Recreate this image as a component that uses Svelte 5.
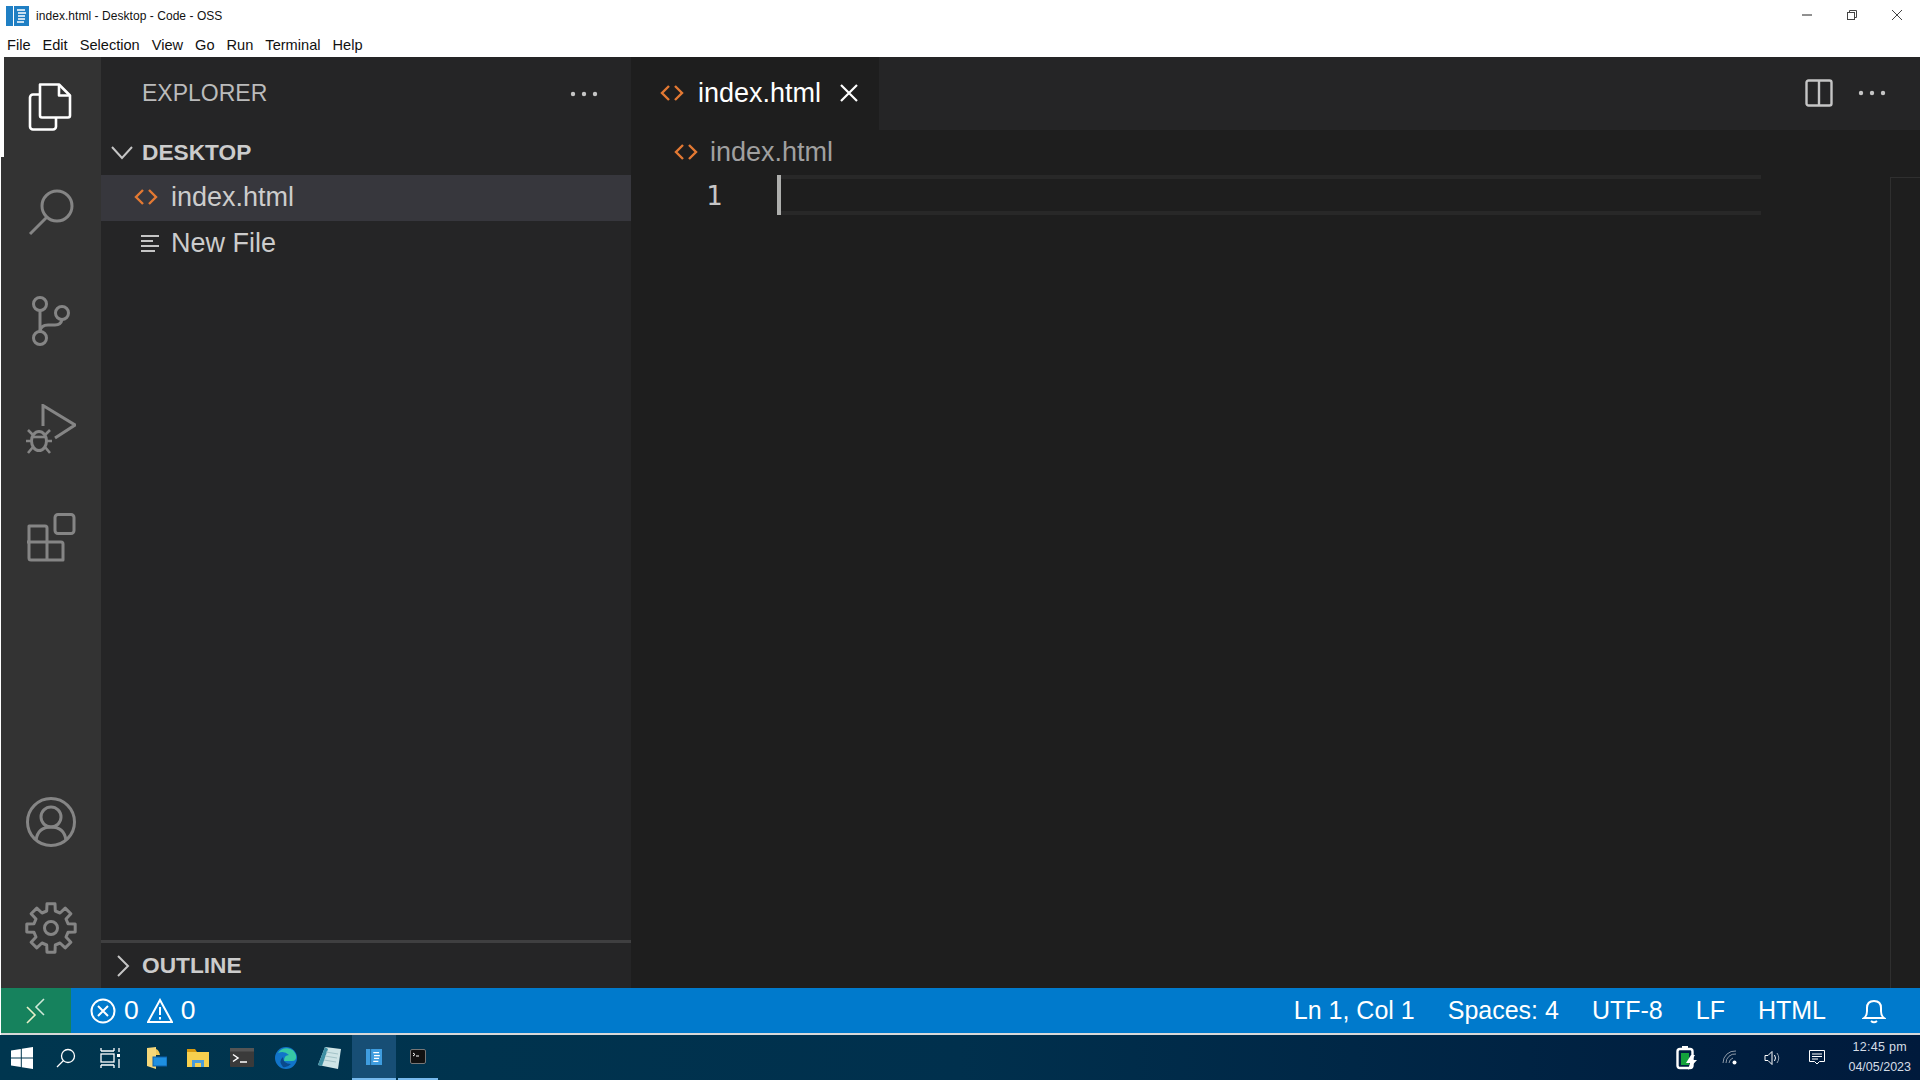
<script>
	const menus = ['File', 'Edit', 'Selection', 'View', 'Go', 'Run', 'Terminal', 'Help'];

	// eight square teeth round the settings cog
	function gearPath(cx, cy, outer, inner, teeth) {
		const pts = [];
		const step = (Math.PI * 2) / teeth;
		for (let i = 0; i < teeth; i++) {
			const a = i * step - Math.PI / 2;
			const spread = [
				[inner, -0.3],
				[outer, -0.2],
				[outer, 0.2],
				[inner, 0.3]
			];
			for (const [r, f] of spread) {
				const t = a + f * step * 1.05;
				pts.push(`${(cx + r * Math.cos(t)).toFixed(1)} ${(cy + r * Math.sin(t)).toFixed(1)}`);
			}
		}
		return 'M' + pts.join(' L') + ' Z';
	}
</script>

{#snippet htmlIcon(size)}
	<svg width={size} height={size} viewBox="0 0 24 24" fill="none" stroke="#e37933" stroke-width="2.4">
		<path d="M9 5 L2 12 L9 19" />
		<path d="M15 5 L22 12 L15 19" />
	</svg>
{/snippet}

{#snippet dots()}
	<svg width="28" height="6" viewBox="0 0 28 6" fill="#c5c5c5">
		<circle cx="3" cy="3" r="2.2" /><circle cx="14" cy="3" r="2.2" /><circle cx="25" cy="3" r="2.2" />
	</svg>
{/snippet}

<div class="window">
	<header class="titlebar">
		<svg class="app-icon" width="24" height="22" viewBox="0 0 24 22">
			<rect x="1" y="1" width="7" height="20" fill="#1f7fc4" />
			<rect x="9" y="1" width="15" height="20" fill="#1f7fc4" />
			<path d="M12 5h8M13 8h8M13 11h7M13 14h7M12 17h7" stroke="#fff" stroke-width="1.3" />
		</svg>
		<span class="title">index.html - Desktop - Code - OSS</span>
		<div class="controls">
			<svg width="12" height="12" viewBox="0 0 12 12"><path d="M1 6h10" stroke="#222" /></svg>
			<svg width="12" height="12" viewBox="0 0 12 12" fill="none" stroke="#444">
				<rect x="1.5" y="3.5" width="7" height="7" /><path d="M3.5 3.5v-2h7v7h-2" />
			</svg>
			<svg width="12" height="12" viewBox="0 0 12 12"><path d="M1 1l10 10M11 1L1 11" stroke="#444" /></svg>
		</div>
	</header>

	<nav class="menubar">
		{#each menus as m}
			<span>{m}</span>
		{/each}
	</nav>

	<div class="workbench">
		<aside class="activity">
			<div class="act-top">
				<div class="act active">
					<svg width="48" height="52" viewBox="0 0 48 52" fill="none" stroke="#fff" stroke-width="2.6" stroke-linejoin="round">
						<path d="M13 4.5 h19 l11 11 v20 a2 2 0 0 1 -2 2 h-26 a2 2 0 0 1 -2 -2 z" />
						<path d="M32 4.5 v11 h11" />
						<path d="M13 14.5 h-7 a3 3 0 0 0 -3 3 v29 a3 3 0 0 0 3 3 h20 a3 3 0 0 0 3 -3 v-9" />
					</svg>
				</div>
				<div class="act">
					<svg width="48" height="50" viewBox="0 0 48 50" fill="none" stroke="#858585" stroke-width="3">
						<circle cx="30" cy="19" r="15" /><path d="M20 30 L3 47" />
					</svg>
				</div>
				<div class="act">
					<svg width="40" height="50" viewBox="0 0 40 50" fill="none" stroke="#858585" stroke-width="3">
						<circle cx="9" cy="8" r="6.5" /><circle cx="31" cy="17" r="6.5" /><circle cx="9" cy="42" r="6.5" />
						<path d="M9 14.5 v21" /><path d="M9 35 q1 -6 8 -6 h7 q6 0 7 -5.500" />
					</svg>
				</div>
				<div class="act">
					<svg width="50" height="50" viewBox="0 0 50 50" fill="none" stroke="#858585" stroke-width="3">
						<path d="M17 22 V1.500 L49 21 L29 34" />
						<ellipse cx="13" cy="37" rx="7.500" ry="9.500" />
						<path d="M6 33 h14" stroke-width="2.600" />
						<path d="M2 26 l5 5 M24 26 l-5 5 M0 37 h5 M21 37 h5 M2 49 l5 -6 M24 49 l-5 -6" stroke-width="2.600" />
					</svg>
				</div>
				<div class="act">
					<svg width="50" height="50" viewBox="0 0 50 50" fill="none" stroke="#858585" stroke-width="3" stroke-linejoin="round">
						<rect x="29" y="1.500" width="19" height="19" rx="3" />
						<path d="M3 13 h16 a2 2 0 0 1 2 2 v14 h14 a2 2 0 0 1 2 2 v16 h-32 a2 2 0 0 1 -2 -2 z" />
						<path d="M1 29 h20 v18" />
					</svg>
				</div>
			</div>
			<div class="act-bottom">
				<div class="act">
					<svg width="50" height="50" viewBox="0 0 50 50" fill="none" stroke="#858585" stroke-width="3">
						<circle cx="25" cy="25" r="23.500" /><circle cx="25" cy="20" r="10" />
						<path d="M10 43 q2 -13 15 -13 q13 0 15 13" />
					</svg>
				</div>
				<div class="act gear">
					<svg width="52" height="52" viewBox="0 0 52 52" fill="none" stroke="#858585" stroke-width="3" stroke-linejoin="round">
						<circle cx="26" cy="26" r="6.500" />
						<path d={gearPath(26, 26, 24.5, 17.5, 8)} />
					</svg>
				</div>
			</div>
		</aside>

		<section class="sidebar">
			<div class="side-head">
				<span>EXPLORER</span>
				{@render dots()}
			</div>
			<div class="folder">
				<svg width="24" height="14" viewBox="0 0 24 14" fill="none" stroke="#c5c5c5" stroke-width="2"><path d="M2 1 L12 12 L22 1" /></svg>
				<span>DESKTOP</span>
			</div>
			<div class="file selected">
				{@render htmlIcon(24)}
				<span>index.html</span>
			</div>
			<div class="file new">
				<svg width="18" height="18" viewBox="0 0 18 18" stroke="#c5c5c5" stroke-width="2">
					<path d="M0 2h18M0 7h12M0 12h18M0 17h14" />
				</svg>
				<span>New File</span>
			</div>
			<div class="outline">
				<svg width="14" height="24" viewBox="0 0 14 24" fill="none" stroke="#c5c5c5" stroke-width="2"><path d="M2 2 L12 12 L2 22" /></svg>
				<span>OUTLINE</span>
			</div>
		</section>

		<main class="editor">
			<div class="tabs">
				<div class="tab">
					{@render htmlIcon(24)}
					<span>index.html</span>
					<svg width="20" height="20" viewBox="0 0 20 20" stroke="#fff" stroke-width="2.200"><path d="M2 2l16 16M18 2L2 18" /></svg>
				</div>
				<div class="tab-actions">
					<svg width="28" height="28" viewBox="0 0 28 28" fill="none" stroke="#c5c5c5" stroke-width="2.400">
						<rect x="1.500" y="1.500" width="25" height="25" rx="2" /><path d="M14 1.500v25" />
					</svg>
					{@render dots()}
				</div>
			</div>
			<div class="crumbs">
				{@render htmlIcon(24)}
				<span>index.html</span>
			</div>
			<div class="code">
				<span class="ln">1</span>
				<div class="current"><i class="cursor"></i></div>
				<div class="minimap"></div>
			</div>
		</main>
	</div>

	<footer class="status">
		<div class="remote">
			<svg width="20" height="26" viewBox="0 0 20 26" fill="none" stroke-width="1.600">
				<path d="M1 9 L9 17 L1 25" stroke="#e8f0c8" /><path d="M18 1 L10 9 L18 17" stroke="#cfe8d8" />
			</svg>
		</div>
		<div class="problems">
			<svg width="26" height="26" viewBox="0 0 26 26" fill="none" stroke="#fff" stroke-width="2">
				<circle cx="13" cy="13" r="11.500" /><path d="M8 8l10 10M18 8L8 18" />
			</svg>
			<span>0</span>
			<svg width="26" height="25" viewBox="0 0 26 25" fill="none" stroke="#fff" stroke-width="2">
				<path d="M13 2 L25 24 H1 Z" /><path d="M13 9v8M13 19v2.500" />
			</svg>
			<span>0</span>
		</div>
		<div class="status-right">
			<span>Ln 1, Col 1</span>
			<span>Spaces: 4</span>
			<span>UTF-8</span>
			<span>LF</span>
			<span>HTML</span>
			<svg class="bell" width="24" height="26" viewBox="0 0 24 26" fill="none" stroke="#fff" stroke-width="2">
				<path d="M2 20 q3 -2 3 -7 v-3 q0 -7 7 -7 q7 0 7 7 v3 q0 5 3 7 z" /><path d="M9 23 q3 2.500 6 0" />
			</svg>
		</div>
	</footer>

	<div class="taskbar">
		<div class="task-left">
			<svg class="t-start" width="22" height="22" viewBox="0 0 22 22" fill="#fff">
				<path d="M0 3.500 L9.800 2 V10.500 H0 Z M10.800 1.800 L22 0 V10.500 H10.800 Z M0 11.500 H9.800 V20 L0 18.500 Z M10.800 11.500 H22 V22 L10.800 20.200 Z" />
			</svg>
			<svg class="t-search" width="20" height="20" viewBox="0 0 20 20" fill="none" stroke="#fff" stroke-width="1.300">
				<circle cx="12" cy="8" r="6.500" /><path d="M7.500 12.500 L1 19" />
			</svg>
			<svg class="t-view" width="20" height="20" viewBox="0 0 20 20" fill="none" stroke="#fff" stroke-width="1.300">
				<path d="M1 3h13M1 17h13M1 0v3M14 0v3M1 17v3M14 17v3" /><rect x="1" y="6" width="13" height="8" />
				<rect x="17" y="6" width="3" height="3" fill="#fff" stroke="none" /><path d="M19 0v4M19 11v9" />
			</svg>
			<svg class="t-notes" width="20" height="22" viewBox="0 0 20 22">
				<path d="M0 1 L9 0 V22 L0 19 Z" fill="#f5d77a" />
				<path d="M9 2 Q12 3 13 8 H9 Z" fill="#f0c95a" />
				<rect x="6" y="10" width="14" height="9" fill="#1e8fe0" stroke="#0d5fa8" />
			</svg>
			<svg class="t-folder" width="22" height="20" viewBox="0 0 22 20">
				<path d="M0 1 h8 l2 3 h-10 z" fill="#d79a10" /><rect x="0" y="4" width="22" height="15" fill="#f7d04e" />
				<rect x="5" y="12" width="12" height="7" fill="#4a9cdb" /><rect x="8" y="15" width="6" height="4" fill="#f7d04e" />
			</svg>
			<svg class="t-term" width="24" height="19" viewBox="0 0 24 19">
				<rect width="24" height="19" rx="1" fill="#3a3a3a" /><rect width="24" height="3.500" fill="#555" />
				<path d="M3 6.500 L8 10 L3 13.500" fill="none" stroke="#fff" stroke-width="1.500" /><path d="M10 14h7" stroke="#fff" stroke-width="1.500" />
			</svg>
			<svg class="t-edge" width="22" height="22" viewBox="0 0 22 22">
				<circle cx="11" cy="11" r="11" fill="#1174c9" />
				<path d="M3 6 A10 10 0 0 1 21 8 Q22 14 17 14 H9 Q9 8 14 8 Q9 3 3 6 Z" fill="#37c8a5" />
				<path d="M8 20 Q3 14 8 10 Q8 17 16 17 Q12 21 8 20 Z" fill="#0a4a8c" />
			</svg>
			<svg class="t-pad" width="24" height="22" viewBox="0 0 24 22">
				<path d="M7 0 L23 2 L20 22 L0 18 Z" fill="#cfe4e6" /><path d="M0 18 L7 0 L10 2 L4 19 Z" fill="#3e8fa3" />
				<path d="M8 5l12 2M7 9l12 2M6 13l12 2" stroke="#a4c3c8" />
			</svg>
			<div class="t-app current-app">
				<svg width="16" height="16" viewBox="0 0 22 22">
					<rect x="0" y="0" width="6" height="22" fill="#3f9de0" /><rect x="7" y="0" width="15" height="22" fill="#3f9de0" />
					<path d="M10 5h8M11 9h8M11 13h7M10 17h7" stroke="#fff" stroke-width="1.600" />
				</svg>
			</div>
			<div class="t-app open-app">
				<svg width="16" height="15" viewBox="0 0 16 15">
					<rect x=".5" y=".5" width="15" height="14" rx="1.500" fill="#111" stroke="#777" />
					<path d="M3 4l2 1.500L3 7M6 7h3" stroke="#fff" fill="none" />
				</svg>
			</div>
		</div>
		<div class="tray">
			<svg class="battery" width="22" height="24" viewBox="0 0 22 24">
				<path d="M6 0h6v3H6z" fill="#fff" />
				<rect x="1.500" y="3" width="15" height="19" rx="2.500" fill="none" stroke="#fff" stroke-width="2.400" />
				<rect x="5" y="7" width="8" height="12" fill="#14a23b" />
				<path d="M15 9 L10 17 H14 L12 24 L21 14 H16 L19 9 Z" fill="#fff" />
			</svg>
			<svg class="wifi" width="15" height="15" viewBox="0 0 15 15" fill="none" stroke="#8e9aa8">
				<path d="M1 13 A12 12 0 0 1 14 1" /><path d="M4 13 A9 9 0 0 1 14 4" /><path d="M7 13 A6 6 0 0 1 11 8" />
				<circle cx="12.500" cy="12.500" r="2" fill="#fff" stroke="none" />
			</svg>
			<svg class="vol" width="18" height="16" viewBox="0 0 18 16" fill="none" stroke="#fff">
				<path d="M1 5.500h3l4-4v13l-4-4H1z" /><path d="M10.500 5q2 3 0 6" /><path d="M13 3q3.500 5 0 10" stroke="#9aa6b4" />
			</svg>
			<svg class="chat" width="16" height="15" viewBox="0 0 16 15" fill="none" stroke="#fff">
				<path d="M.5 .5h15v11h-5l-2.500 2.500l-2.500-2.500h-5z" /><path d="M3 4h10M3 6.500h10M3 9h6" />
			</svg>
			<div class="clock">
				<span>12:45 pm</span>
				<span>04/05/2023</span>
			</div>
		</div>
	</div>
</div>

<style>
	:global(body) {
		margin: 0;
		overflow: hidden;
		background: #fff;
	}

	.window {
		width: 1920px;
		height: 1080px;
		display: flex;
		flex-direction: column;
		font-family: 'Liberation Sans', Arial, sans-serif;
	}

	.titlebar {
		height: 30px;
		display: flex;
		align-items: center;
		padding: 1px 0 0 5px;
		box-sizing: border-box;
		gap: 7px;
		background: #fff;
		position: relative;
	}

	.title {
		font-size: 12px;
		color: #111;
		letter-spacing: 0.05px;
	}

	.controls {
		margin-left: auto;
		display: flex;
		gap: 33px;
		padding-right: 17px;
		margin-top: -2px;
	}

	.menubar {
		height: 27px;
		display: flex;
		gap: 12px;
		padding: 2px 0 0 7px;
		box-sizing: border-box;
		align-items: center;
		font-size: 14.6px;
		color: #111;
		background: #fff;
	}

	.workbench {
		height: 931px;
		display: flex;
		padding-left: 1px;
		background: #fff;
	}

	.activity {
		width: 100px;
		background: #333;
		display: flex;
		flex-direction: column;
		justify-content: space-between;
		flex-shrink: 0;
	}

	.act {
		height: 108.5px;
		display: flex;
		align-items: center;
		justify-content: center;
	}

	.act.active {
		height: 100px;
		border-left: 4px solid #fff;
		margin-left: -1px;
		padding: 0 3px 2px 0;
		box-sizing: border-box;
		margin-bottom: 1px;
	}

	.act.gear {
		box-sizing: border-box;
		padding-bottom: 5px;
	}

	.act-bottom {
		padding-bottom: 3px;
	}

	.sidebar {
		width: 530px;
		flex-shrink: 0;
		background: #252526;
		display: flex;
		flex-direction: column;
		color: #ccc;
	}

	.side-head {
		height: 73px;
		display: flex;
		align-items: center;
		justify-content: space-between;
		padding: 0 33px 0 41px;
		font-size: 23px;
		color: #bbb;
	}

	.folder {
		height: 45px;
		display: flex;
		align-items: center;
		gap: 8px;
		padding-left: 9px;
		font-size: 22.7px;
		font-weight: 700;
		box-sizing: border-box;
	}

	.file {
		height: 46px;
		display: flex;
		align-items: center;
		font-size: 27px;
		padding-bottom: 2px;
		box-sizing: border-box;
	}

	.file.selected {
		background: #37373d;
		padding-left: 33px;
		gap: 13px;
	}

	.file.new {
		padding-left: 40px;
		gap: 12px;
	}

	.outline {
		margin-top: auto;
		height: 45px;
		border-top: 3px solid #3f3f40;
		display: flex;
		align-items: center;
		gap: 12px;
		padding-left: 15px;
		font-size: 22.7px;
		font-weight: 700;
	}

	.editor {
		flex: 1;
		background: #1e1e1e;
		display: flex;
		flex-direction: column;
		min-width: 0;
	}

	.tabs {
		height: 73px;
		display: flex;
		background: #252526;
	}

	.tab {
		width: 248px;
		box-sizing: border-box;
		background: #1e1e1e;
		display: flex;
		align-items: center;
		padding: 0 0 1px 29px;
		gap: 14px;
		font-size: 27px;
		color: #fff;
	}

	.tab svg:last-child {
		margin-left: 4px;
	}

	.tab-actions {
		margin-left: auto;
		display: flex;
		align-items: center;
		gap: 25px;
		padding: 0 34px 1px 0;
	}

	.crumbs {
		height: 44px;
		display: flex;
		align-items: center;
		padding-left: 43px;
		gap: 12px;
		font-size: 27px;
		color: #a0a0a0;
	}

	.code {
		flex: 1;
		display: flex;
		align-items: flex-start;
		position: relative;
		font-size: 27px;
		color: #c6c6c6;
	}

	.ln {
		width: 146px;
		box-sizing: border-box;
		padding: 1px 0 0 75px;
		height: 42px;
		line-height: 42px;
		font-family: 'DejaVu Sans Mono', monospace;
	}

	.current {
		width: 984px;
		height: 40px;
		box-sizing: border-box;
		border-top: 4px solid #282828;
		border-bottom: 4px solid #282828;
		position: relative;
		margin-top: 1px;
	}

	.cursor {
		position: absolute;
		left: 0;
		top: -4px;
		width: 4px;
		height: 40px;
		background: #aeafad;
	}

	.minimap {
		position: absolute;
		right: 0;
		top: 3px;
		width: 29px;
		bottom: 0;
		border-left: 1px solid #2f2f2f;
		border-top: 1px solid #2f2f2f;
	}

	.status {
		height: 47px;
		display: flex;
		align-items: center;
		background: #007acc;
		color: #fff;
		font-size: 27px;
		margin-left: 1px;
		border-bottom: 2px solid #d8d8d8;
		box-sizing: border-box;
	}

	.remote {
		width: 70px;
		height: 100%;
		background: #16825d;
		display: flex;
		align-items: center;
		justify-content: center;
	}

	.problems {
		display: flex;
		align-items: center;
		gap: 8px;
		padding-left: 19px;
		font-size: 26.5px;
	}

	.status-right {
		margin-left: auto;
		display: flex;
		align-items: center;
		gap: 33px;
		padding-right: 34px;
		font-size: 25px;
	}

	.bell {
		margin-left: 3px;
	}

	.taskbar {
		height: 45px;
		display: flex;
		align-items: center;
		justify-content: space-between;
		background: linear-gradient(90deg, #00364f 0%, #00304d 50%, #001a3c 100%);
	}

	.task-left {
		display: flex;
		align-items: center;
		height: 100%;
		padding-left: 11px;
	}

	.t-search { margin-left: 23px; }
	.t-view { margin-left: 24px; }
	.t-notes { margin-left: 27px; }
	.t-folder { margin-left: 20px; }
	.t-term { margin-left: 21px; }
	.t-edge { margin-left: 21px; }
	.t-pad { margin-left: 21px; }

	.t-app {
		height: 100%;
		box-sizing: border-box;
		display: flex;
		align-items: center;
		justify-content: center;
		border-bottom: 2px solid #76b9ed;
	}

	.current-app {
		width: 44px;
		margin-left: 10px;
		background: #174e75;
	}

	.open-app {
		width: 40px;
		margin-left: 2px;
	}

	.tray {
		display: flex;
		align-items: center;
		color: #d5dde6;
		font-size: 12.5px;
		padding-right: 9px;
	}

	.wifi { margin-left: 24px; }
	.vol { margin-left: 27px; }
	.chat { margin-left: 27px; }

	.clock {
		display: flex;
		flex-direction: column;
		align-items: center;
		gap: 6px;
		margin-left: 23px;
	}

	.clock span:first-child {
		letter-spacing: 0.3px;
		margin-top: -2px;
	}
</style>
